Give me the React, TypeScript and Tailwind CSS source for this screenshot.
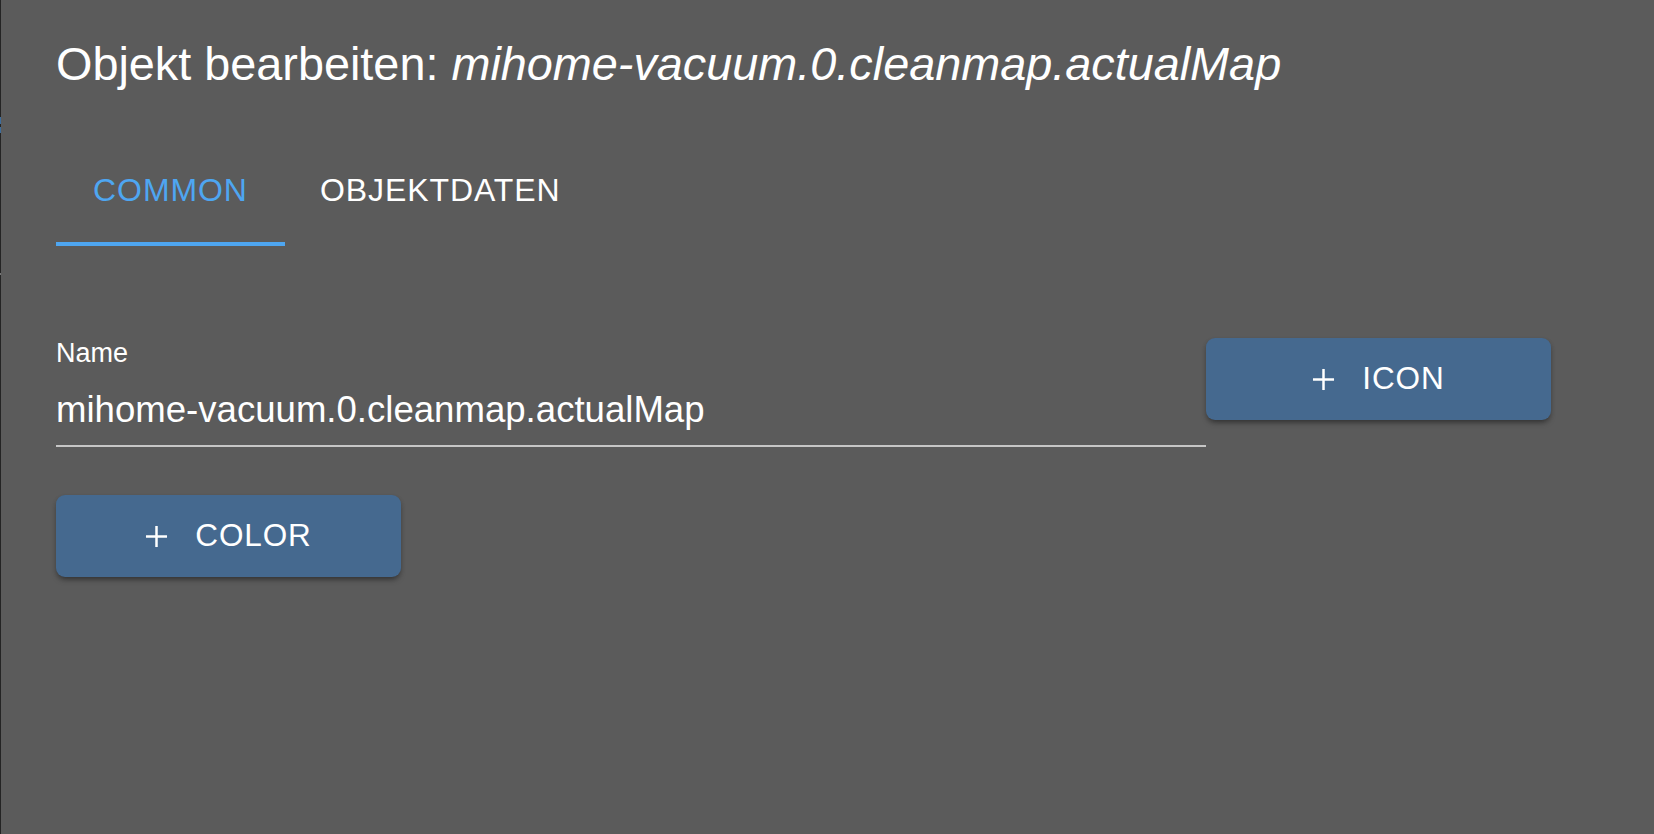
import React from 'react';

function PlusIcon() {
  return (
    <svg viewBox="0 0 24 24" className="w-[23px] h-[23px]" fill="none" stroke="white" strokeWidth="2.6">
      <line x1="12" y1="1" x2="12" y2="23" />
      <line x1="1" y1="12" x2="23" y2="12" />
    </svg>
  );
}

function ActionButton({ label }: { label: string }) {
  return (
    <button className="w-[345px] h-[82px] rounded-[9px] bg-[#45698f] text-white flex items-center justify-center shadow-[0_4px_6px_-2px_rgba(0,0,0,0.4),0_2px_4px_0_rgba(0,0,0,0.14)]">
      <PlusIcon />
      <span className="ml-[27px] text-[31.5px] tracking-[0.02857em] leading-none">{label}</span>
    </button>
  );
}

export default function App() {
  return (
    <div className="w-full h-[834px] bg-[#5b5b5b] flex font-['Liberation_Sans',Arial,sans-serif] text-white overflow-hidden">
      {/* left edge of the window behind */}
      <div className="w-px h-full bg-[#242424] flex flex-col">
        <div className="h-[117px]" />
        <div className="h-[7px] bg-[#3d6d9c]" />
        <div className="h-[3px]" />
        <div className="h-[6px] bg-[#3d6d9c]" />
        <div className="h-[140px]" />
        <div className="h-[2px] bg-[#777]" />
      </div>

      <div className="flex-1 pl-[55px] flex flex-col">
        <h1 className="pt-[37px] text-[46.8px] leading-[55px] font-normal whitespace-nowrap">
          Objekt bearbeiten: <i>mihome-vacuum.0.cleanmap.actualMap</i>
        </h1>

        {/* tabs */}
        <div className="mt-[46px] flex h-[108px]">
          <div className="relative w-[229px] pb-[4px] flex items-center justify-center text-[32px] tracking-[0.02857em] text-[#4ea6f1]">
            COMMON
            <div className="absolute left-0 right-0 bottom-0 h-[4.5px] bg-[#4ea6f1]" />
          </div>
          <div className="pl-[35px] pr-[36px] pb-[4px] flex items-center text-[32px] tracking-[0.02857em]">
            OBJEKTDATEN
          </div>
        </div>

        {/* name field + icon */}
        <div className="mt-[92px] flex items-start">
          <div className="w-[1150px] pt-[2px] flex flex-col">
            <label className="text-[27px] leading-[27px]">Name</label>
            <div className="mt-[21px] text-[36.6px] leading-[44px] whitespace-nowrap">
              mihome-vacuum.0.cleanmap.actualMap
            </div>
            <div className="mt-[13px] h-[2px] bg-[#c6c6c6]" />
          </div>
          <ActionButton label="ICON" />
        </div>

        <div className="mt-[48px]">
          <ActionButton label="COLOR" />
        </div>
      </div>
    </div>
  );
}
